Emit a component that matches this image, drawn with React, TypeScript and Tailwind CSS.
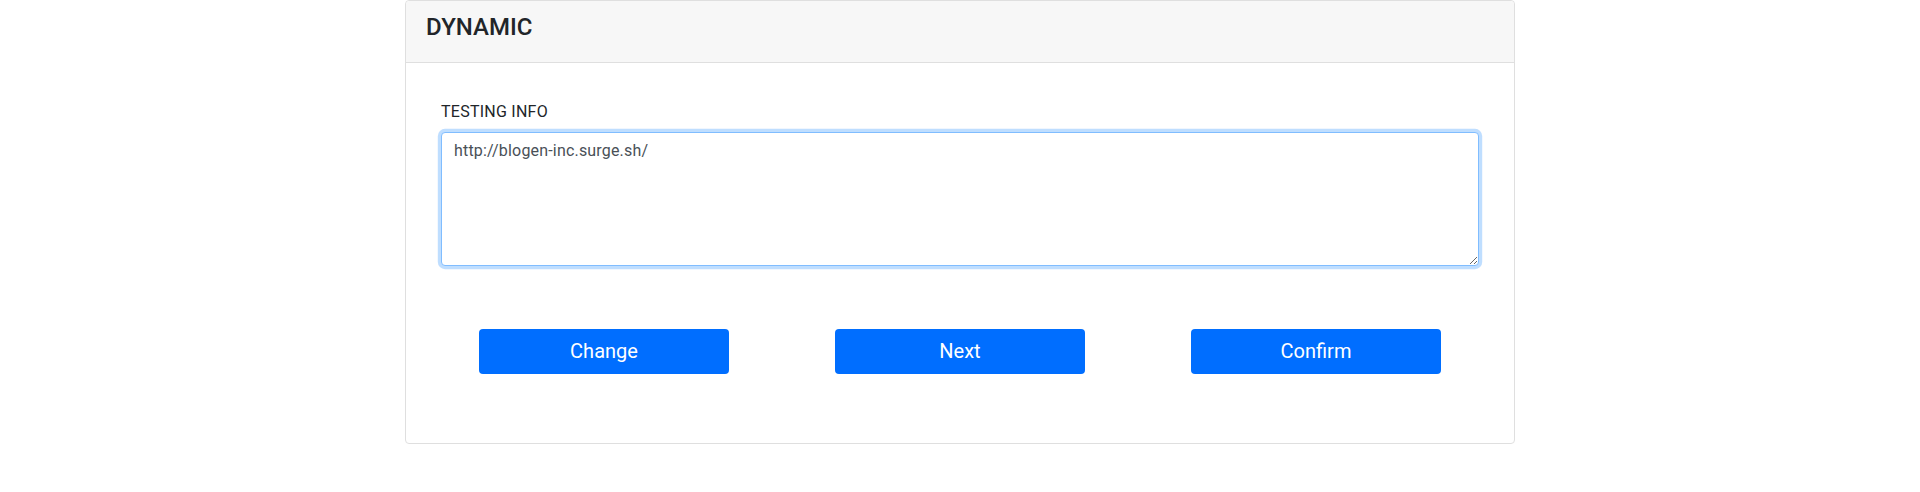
import React from "react";

export default function App() {
  const font = { fontFamily: 'Roboto, "Liberation Sans", Arial, sans-serif' };
  return (
    <div className="w-full bg-white flex justify-center" style={font}>
      <div className="w-[1110px] border border-[#dfdfdf] rounded-[4px] bg-white">
        <div className="bg-[#f7f7f7] border-b border-[#dfdfdf] px-5 py-3 rounded-t-[4px]">
          <h4 className="text-[24px] leading-[28.8px] mb-2 font-medium text-[#212529]">DYNAMIC</h4>
        </div>
        <div className="p-5 pb-[21px]">
          <div className="px-[15px] pt-[17px]">
            <label className="block text-[16px] leading-[24px] mb-2 text-[#212529] tracking-[0.25px]">TESTING INFO</label>
            <textarea
              rows={5}
              defaultValue="http://blogen-inc.surge.sh/"
              className="block w-full h-[134px] px-3 py-[6px] text-[16px] leading-[24px] tracking-[0.18px] text-[#495057] bg-white border border-[#80bdff] rounded-[4px] outline-none shadow-[0_0_0_3.2px_rgba(0,123,255,0.25)]"
              style={font}
            />
          </div>
          <div className="grid grid-cols-3 mt-[63px]">
            {["Change", "Next", "Confirm"].map((t) => (
              <div key={t} className="flex justify-center">
                <button
                  className="w-[250px] h-[45px] bg-[#006eff] text-white text-[20px] leading-[30px] rounded-[4px] flex items-center justify-center"
                  style={font}
                >
                  {t}
                </button>
              </div>
            ))}
          </div>
          <div className="h-[48px]" />
        </div>
      </div>
    </div>
  );
}
